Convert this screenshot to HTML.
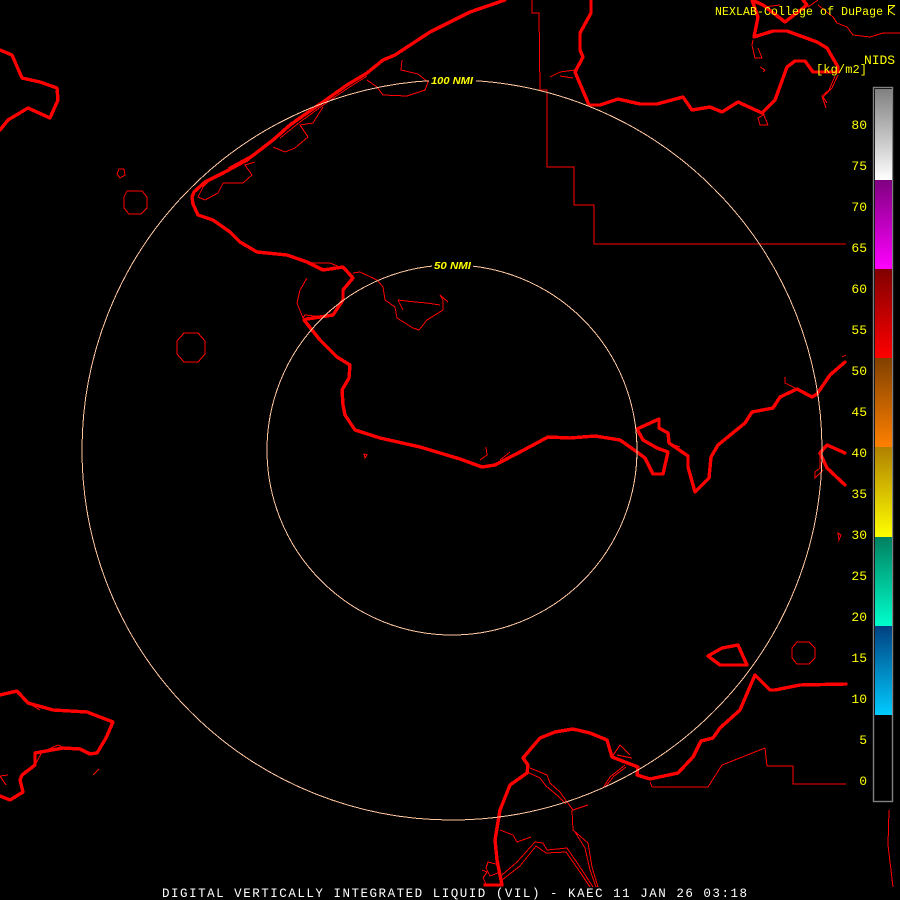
<!DOCTYPE html>
<html><head><meta charset="utf-8"><style>
html,body{margin:0;padding:0;background:#000;width:900px;height:900px;overflow:hidden}
svg{display:block}
.k{fill:none;stroke:#f00;stroke-width:3.4;stroke-linejoin:round;stroke-linecap:round;shape-rendering:crispEdges}
.t{fill:none;stroke:#f00;stroke-width:1;shape-rendering:crispEdges}
.m{font-family:"Liberation Mono",monospace;fill:#ff0}
.n{font-family:"Liberation Sans",sans-serif;font-weight:bold;font-style:italic;font-size:10px;fill:#ff0}
</style></head><body>
<svg width="900" height="900" viewBox="0 0 900 900" xmlns="http://www.w3.org/2000/svg">
<defs>
<linearGradient id="g1" x1="0" y1="0" x2="0" y2="1"><stop offset="0" stop-color="#808080"/><stop offset="1" stop-color="#fff"/></linearGradient>
<linearGradient id="g2" x1="0" y1="0" x2="0" y2="1"><stop offset="0" stop-color="#800080"/><stop offset="1" stop-color="#f0f"/></linearGradient>
<linearGradient id="g3" x1="0" y1="0" x2="0" y2="1"><stop offset="0" stop-color="#800000"/><stop offset="1" stop-color="#f00"/></linearGradient>
<linearGradient id="g4" x1="0" y1="0" x2="0" y2="1"><stop offset="0" stop-color="#804000"/><stop offset="1" stop-color="#ff8000"/></linearGradient>
<linearGradient id="g5" x1="0" y1="0" x2="0" y2="1"><stop offset="0" stop-color="#b08000"/><stop offset="1" stop-color="#ff0"/></linearGradient>
<linearGradient id="g6" x1="0" y1="0" x2="0" y2="1"><stop offset="0" stop-color="#008060"/><stop offset="1" stop-color="#0fc"/></linearGradient>
<linearGradient id="g7" x1="0" y1="0" x2="0" y2="1"><stop offset="0" stop-color="#004080"/><stop offset="1" stop-color="#0cf"/></linearGradient>
</defs>
<rect width="900" height="900" fill="#000"/>

<!-- thick coast -->
<g class="k">
<path d="M505 0 470 12 430 32 395 55 383 60 367 73 347 85 323 102 307 113 290 125 273 140 247 160 223 173 205 182 194 192 192 197 193 204 198 215 213 220 230 232 240 242 257 252 287 255 307 262 323 270 343 267 353 278 343 290 343 300 333 315 307 319 304 320 320 340 337 357 350 365 349 378 342 390 343 405 345 415 355 430 380 438 420 447 460 459 482 467 495 465 520 452 548 437 570 438 595 436 620 440 637 452 645 458 653 474 663 474 668 452 657 448 643 440 637 429 659 419 659 428 668 433 669 443 688 456 688 467 695 492 709 478 711 457 718 445 745 423 752 412 773 408 780 397 797 389 812 397 817 394 830 375 845 362"/>
<path d="M820 453 827 445 845 453M820 453 827 468 845 485"/>
<path d="M591 0 591 13 580 33 580 50 583 57 575 72 589 105 600 105 618 99 640 104 657 104 683 97 692 110 710 107 722 112 738 102 762 113 775 100 787 67 795 61 805 61 813 72 838 72 838 67 827 48 817 42 787 31 773 31 754 37 758 17 752 0"/>
<path d="M752 0 763 5 785 22 807 5 803 0"/>
<path d="M0 50 12 55 22 78 40 82 57 88 58 100 50 118 28 108 8 120 0 130"/>
<path d="M0 695 17 691 28 703 53 710 87 712 113 722 106 738 97 753 90 754 80 749 63 748 35 753 35 765 22 775 20 780 23 792 10 800 0 796"/>
<path d="M502 885 497 860 495 840 500 810 510 785 527 773 528 765 523 758 540 738 555 732 573 729 590 733 607 740 612 757 638 767 637 775 650 779 678 773 693 757 701 741 713 738 720 728 740 710 755 675 770 690 775 690 800 685 846 684"/>
<path d="M708 656 722 648 738 645 747 665 720 665Z"/>
<path d="M485 885 502 885"/>
</g>

<!-- thin lines -->
<g class="t">
<path d="M532 0V13H539L540 90H547V167H574V205H594V244H846"/>
<path d="M652 787H708L722 765 765 748 767 766H793V784H846"/>
<path d="M889 810 888 845 893 887"/>
<path d="M402 60 401 70 418 74 428 82 425 90 407 96 383 95 377 87 367 80"/>
<path d="M367 76 345 90 322 106 300 122 280 138M228 168 250 156 270 142"/>
<path d="M323 107 313 123 300 125 308 137 295 148 285 152 273 147"/>
<path d="M255 162 245 165 252 175 243 183 223 183 218 193 205 200 198 197 203 187 213 177"/>
<path d="M353 273 360 272 377 280 383 287 385 300 395 307 397 318 413 328 419 330 427 320 443 310 443 300 440 295 448 302"/>
<path d="M398 300 415 302 427 303 440 305M403 310 398 300"/>
<path d="M307 278 300 290 297 303 303 318 305 315 323 317 333 308"/>
<path d="M307 263 330 263 347 270"/>
<path d="M530 768 547 775 550 783 560 792 567 802 573 810 588 805"/>
<path d="M527 772 540 778 546 786 558 796 566 804"/>
<path d="M572 810 573 830 588 843 592 867 598 887"/>
<path d="M575 832 585 848 590 870 596 887"/>
<path d="M500 830 513 835 517 842 531 837"/>
<path d="M502 875 517 862 535 842 543 843 547 850 567 848 582 870 593 887"/>
<path d="M502 880 520 866 536 846 546 853 566 852 580 872 590 887"/>
<path d="M603 788 610 777 625 765M606 786 614 776 626 767"/>
<path d="M617 755 632 758M612 757 620 745 630 755"/>
<path d="M650 782 652 787"/>
<path d="M488 862 496 864 500 872 490 876 486 868ZM482 870 487 872 483 878 486 884"/>
<path d="M808 7 818 0M818 5 833 17 837 23 847 27 853 35 870 37 883 33 900 33"/>
<path d="M753 40 752 45 755 58 762 58 758 48"/>
<path d="M760 67 765 70 763 72"/>
<path d="M838 75 832 88 823 97 827 103M835 76 829 90 822 96 826 108"/>
<path d="M763 113 768 125 760 125 758 118 765 114"/>
<path d="M550 77 560 72 575 70M560 76 573 78"/>
<path d="M785 377 785 383 795 388M842 357 846 355"/>
<path d="M820 452V468L815 472V478L823 470"/>
<path d="M668 443 680 447"/>
<path d="M486 447 487 455 480 460M500 460 510 452"/>
<path d="M364 454 367 455 365 458Z"/>
<path d="M838 533 841 535 839 540Z"/>
<path d="M763 7 780 5"/>
<path d="M93 775 99 769"/>
<path d="M35 765 42 752 58 745 65 748M8 775 0 776 6 785"/>
<path d="M28 703 40 710"/>
<polygon points="127,191 142,191 147,197 147,208 141,214 129,214 124,208 124,197"/>
<polygon points="184,333 198,333 205,341 205,354 198,362 184,362 177,354 177,341"/>
<polygon points="797,642 809,642 815,648 815,658 809,664 797,664 792,658 792,648"/>
<polygon points="119,169 124,169 125,175 120,178 117,174"/>
</g>

<!-- range rings -->
<g fill="none" stroke="#ffc8a0" stroke-width="1" shape-rendering="crispEdges">
<circle cx="452" cy="450" r="370"/>
<circle cx="452" cy="450" r="185"/>
</g>
<rect x="429" y="74" width="47" height="12" fill="#000"/>
<rect x="432" y="259" width="41" height="12" fill="#000"/>
<text class="n" x="431" y="84" textLength="42" lengthAdjust="spacingAndGlyphs">100 NMI</text>
<text class="n" x="434" y="269" textLength="37" lengthAdjust="spacingAndGlyphs">50 NMI</text>

<!-- color bar -->
<rect x="873.5" y="87.5" width="19" height="714" fill="#000" stroke="#808080" stroke-width="1.4"/>
<rect x="875" y="89" width="17" height="91" fill="url(#g1)"/>
<rect x="875" y="180" width="17" height="89" fill="url(#g2)"/>
<rect x="875" y="269" width="17" height="89" fill="url(#g3)"/>
<rect x="875" y="358" width="17" height="89" fill="url(#g4)"/>
<rect x="875" y="447" width="17" height="90" fill="url(#g5)"/>
<rect x="875" y="537" width="17" height="89" fill="url(#g6)"/>
<rect x="875" y="626" width="17" height="89" fill="url(#g7)"/>

<!-- labels -->
<g class="m" font-size="13" text-anchor="end">
<text x="867" y="129">80</text><text x="867" y="170">75</text><text x="867" y="211">70</text><text x="867" y="252">65</text>
<text x="867" y="293">60</text><text x="867" y="334">55</text><text x="867" y="375">50</text><text x="867" y="416">45</text>
<text x="867" y="457">40</text><text x="867" y="498">35</text><text x="867" y="539">30</text><text x="867" y="580">25</text>
<text x="867" y="621">20</text><text x="867" y="662">15</text><text x="867" y="703">10</text><text x="867" y="744">5</text>
<text x="867" y="785">0</text>
</g>
<text class="m" x="715" y="15" font-size="11.5" textLength="168" lengthAdjust="spacing">NEXLAB-College of DuPage</text>
<path d="M888.500 15V5.500H895M888.500 10.500 895 5.500M888.500 10.500 895 15" fill="none" stroke="#ff0" stroke-width="1"/>
<text class="m" x="864" y="64" font-size="13" textLength="31" lengthAdjust="spacing">NIDS</text>
<text class="m" x="816" y="73" font-size="12" textLength="51" lengthAdjust="spacing">[kg/m2]</text>
<text x="162" y="897" font-family="'Liberation Mono',monospace" font-size="12.5" fill="#fff" textLength="585" lengthAdjust="spacing">DIGITAL VERTICALLY INTEGRATED LIQUID (VIL) - KAEC 11 JAN 26 03:18</text>
</svg>
</body></html>
